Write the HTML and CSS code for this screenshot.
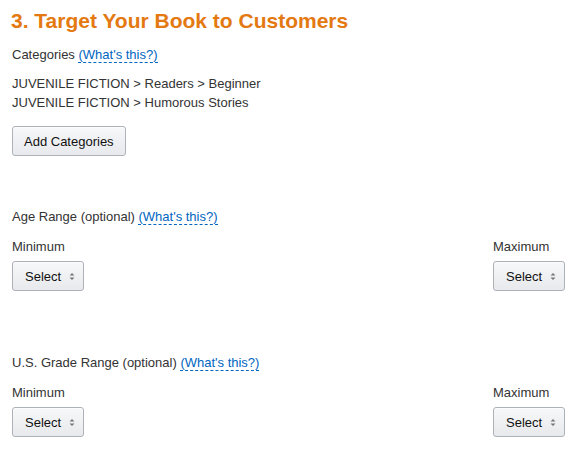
FILE: index.html
```html
<!DOCTYPE html>
<html>
<head>
<meta charset="utf-8">
<link rel="stylesheet" href="styles.css">
</head>
<body>
<div class="page">
  <h1 class="title">3. Target Your Book to Customers</h1>

  <div class="label">Categories <a class="help">(What's this?)</a></div>
  <ul class="cats">
    <li>JUVENILE FICTION &gt; Readers &gt; Beginner</li>
    <li>JUVENILE FICTION &gt; Humorous Stories</li>
  </ul>
  <button class="btn">Add Categories</button>

  <div class="label section">Age Range (optional) <a class="help">(What's this?)</a></div>
  <div class="range">
    <div class="field">
      <div class="sublabel">Minimum</div>
      <button class="btn select">Select <svg class="arrows" width="6" height="9" viewBox="0 0 6 9"><path d="M0.5 3.5 L3 1 L5.5 3.5 Z M0.5 5.5 L3 8 L5.5 5.5 Z" fill="#777"/></svg></button>
    </div>
    <div class="field">
      <div class="sublabel">Maximum</div>
      <button class="btn select">Select <svg class="arrows" width="6" height="9" viewBox="0 0 6 9"><path d="M0.5 3.5 L3 1 L5.5 3.5 Z M0.5 5.5 L3 8 L5.5 5.5 Z" fill="#777"/></svg></button>
    </div>
  </div>

  <div class="label section2">U.S. Grade Range (optional) <a class="help">(What's this?)</a></div>
  <div class="range">
    <div class="field">
      <div class="sublabel">Minimum</div>
      <button class="btn select">Select <svg class="arrows" width="6" height="9" viewBox="0 0 6 9"><path d="M0.5 3.5 L3 1 L5.5 3.5 Z M0.5 5.5 L3 8 L5.5 5.5 Z" fill="#777"/></svg></button>
    </div>
    <div class="field">
      <div class="sublabel">Maximum</div>
      <button class="btn select">Select <svg class="arrows" width="6" height="9" viewBox="0 0 6 9"><path d="M0.5 3.5 L3 1 L5.5 3.5 Z M0.5 5.5 L3 8 L5.5 5.5 Z" fill="#777"/></svg></button>
    </div>
  </div>
</div>
</body>
</html>
```

FILE: styles.css
```css
html, body {
  margin: 0;
  padding: 0;
  background: #ffffff;
}

body {
  font-family: "Liberation Sans", Arial, sans-serif;
  font-size: 13px;
  line-height: 19px;
  color: #333333;
}

.page {
  padding: 9px 12px 0 12px;
}

.title {
  margin: 0 0 0 -1px;
  font-size: 21px;
  line-height: 24px;
  font-weight: bold;
  color: #e47911;
}

.label {
  margin-top: 12px;
}

.help {
  color: #0066c0;
  text-decoration: none;
  border-bottom: 1px dashed #0066c0;
  cursor: pointer;
}

.cats {
  list-style: none;
  margin: 10px 0 0 0;
  padding: 0;
}

.btn {
  display: inline-flex;
  align-items: center;
  box-sizing: border-box;
  height: 30px;
  margin: 14px 0 0 0;
  padding: 0 11px;
  font-family: "Liberation Sans", Arial, sans-serif;
  font-size: 13px;
  color: #111111;
  background: linear-gradient(#f7f8fa, #e7e9ec);
  border: 1px solid #adb1b8;
  border-radius: 3px;
  box-shadow: inset 0 1px 0 rgba(255,255,255,0.6);
}

.section {
  margin-top: 51px;
}

.section2 {
  margin-top: 62px;
}

.range {
  display: flex;
  justify-content: space-between;
  margin-top: 11px;
}

.sublabel {
  line-height: 19px;
}

.select {
  margin-top: 5px;
  width: 72px;
  padding: 0 0 0 12px;
  gap: 8px;
}

.arrows {
  display: block;
}
```
